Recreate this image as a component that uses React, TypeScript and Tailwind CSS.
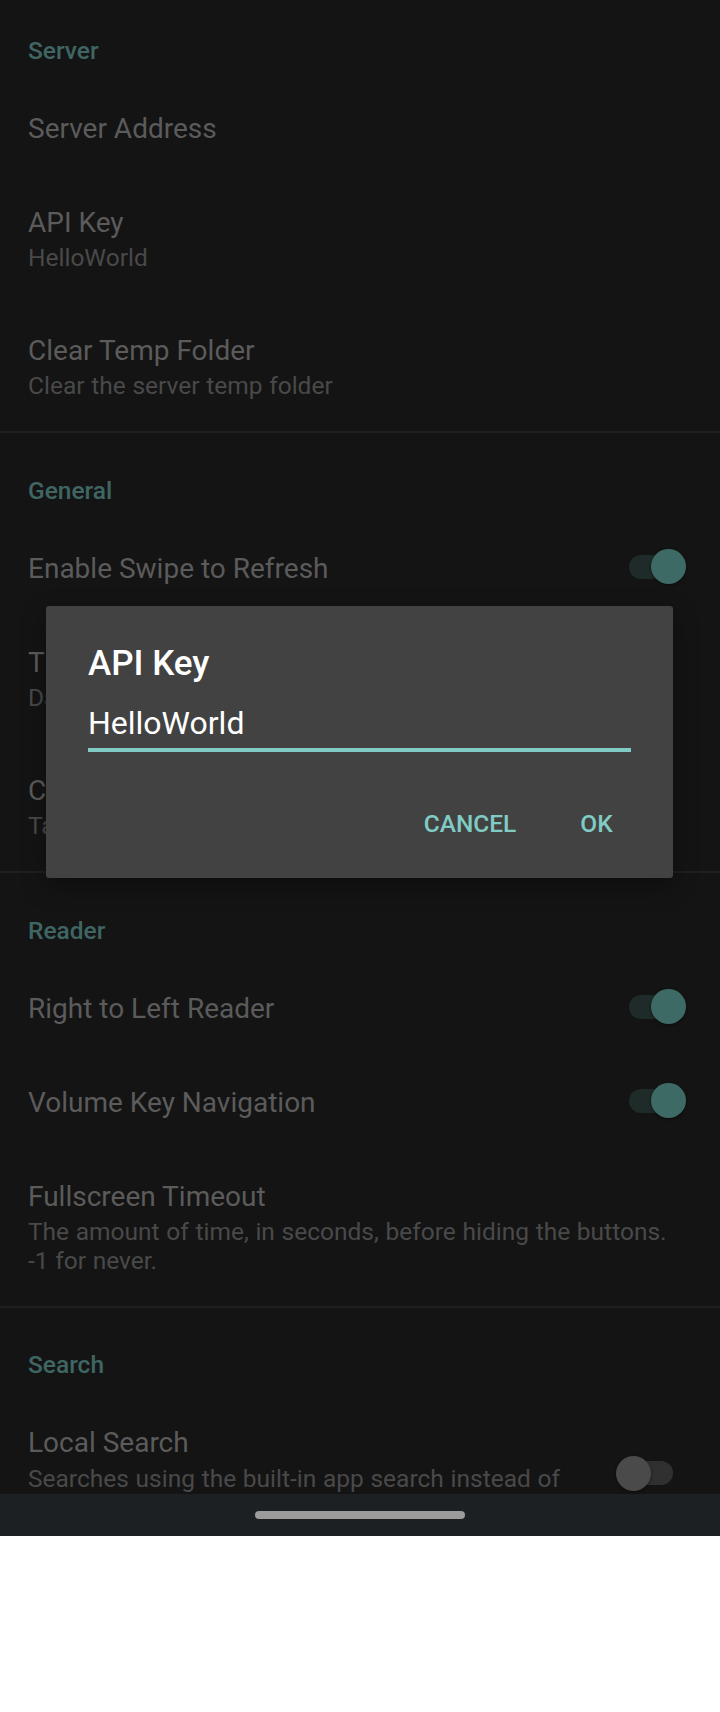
import React from 'react';

type Row = {
    title: string;
    summary?: React.ReactNode;
    toggle?: 'on' | 'off';
};

type Section = {
    name: string;
    rows: Row[];
};

const sections: Section[] = [
    {
        name: 'Server',
        rows: [
            { title: 'Server Address' },
            { title: 'API Key', summary: 'HelloWorld' },
            { title: 'Clear Temp Folder', summary: 'Clear the server temp folder' },
        ],
    },
    {
        name: 'General',
        rows: [
            { title: 'Enable Swipe to Refresh', toggle: 'on' },
            { title: 'Theme', summary: 'Dark' },
            { title: 'Compact Layout', summary: 'Tap to use a denser list' },
        ],
    },
    {
        name: 'Reader',
        rows: [
            { title: 'Right to Left Reader', toggle: 'on' },
            { title: 'Volume Key Navigation', toggle: 'on' },
            {
                title: 'Fullscreen Timeout',
                summary: (
                    <>
                        The amount of time, in seconds, before hiding the buttons.
                        <br />
                        -1 for never.
                    </>
                ),
            },
        ],
    },
    {
        name: 'Search',
        rows: [
            {
                title: 'Local Search',
                summary: 'Searches using the built-in app search instead of the server search.',
                toggle: 'off',
            },
        ],
    },
];

function SwitchOn() {
    // thumb sits over the track, so the pair is drawn in a small relative box
    return (
        <div className="relative -mt-[3px] mr-[34px] h-[35px] w-[57px] shrink-0">
            <div className="absolute top-[5.5px] left-0 h-[24px] w-[50px] rounded-full bg-[#1f2b29]" />
            <div className="absolute top-0 right-0 size-[35px] rounded-full bg-[#3e6a65] shadow-[0_1px_3px_rgba(0,0,0,0.5)]" />
        </div>
    );
}

function SwitchOff() {
    return (
        <div className="relative -mt-[2px] mr-[47px] ml-[20px] h-[35px] w-[57px] shrink-0">
            <div className="absolute top-[5.5px] right-0 h-[24px] w-[50px] rounded-full bg-[#303030]" />
            <div className="absolute top-0 left-0 size-[35px] rounded-full bg-[#4a4a4a] shadow-[0_1px_3px_rgba(0,0,0,0.5)]" />
        </div>
    );
}

function PrefRow({ row }: { row: Row }) {
    return (
        <div className="flex items-center py-[30.5px] pl-[28px]">
            <div className="min-w-0 flex-1">
                <div className="text-[28px] leading-[33px] text-[#5b5b5b]">{row.title}</div>
                {row.summary && (
                    <div className="mt-[5.5px] text-[24.5px] leading-[28.5px] [word-spacing:0.6px] text-[#494949]">
                        {row.summary}
                    </div>
                )}
            </div>
            {row.toggle === 'on' && <SwitchOn />}
            {row.toggle === 'off' && <SwitchOff />}
        </div>
    );
}

export default function App() {
    return (
        <div className="h-[1712px] w-[720px] bg-white font-['Roboto',sans-serif]">
            <div className="relative h-[1494px] overflow-hidden bg-[#141414]">
                {sections.map((section, i) => (
                    <div key={section.name}>
                        {i > 0 && <div className="h-[2px] bg-[#1f1f1f]" />}
                        <div
                            className={
                                i === 0
                                    ? 'pt-[36.5px] pb-[16px] pl-[28px] text-[24.5px] leading-[28.7px] font-medium text-[#3f6663]'
                                    : 'pt-[43.4px] pb-[16px] pl-[28px] text-[24.5px] leading-[28.7px] font-medium text-[#3f6663]'
                            }
                        >
                            {section.name}
                        </div>
                        {section.rows.map((row) => (
                            <PrefRow key={row.title} row={row} />
                        ))}
                    </div>
                ))}

                {/* API key dialog */}
                <div className="absolute top-[606px] left-[46px] flex h-[272px] w-[627px] flex-col rounded-[3px] bg-[#424242] shadow-[0_8px_24px_rgba(0,0,0,0.35)]">
                    <div className="px-[42px] pt-[36.5px] text-[35px] leading-[41px] font-medium text-white">
                        API Key
                    </div>
                    <div className="mx-[42px] mt-[21.8px]">
                        <div className="text-[32px] leading-[37.5px] text-white">HelloWorld</div>
                        <div className="mt-[5.5px] h-[3.5px] bg-[#80cbc4]" />
                    </div>
                    <div className="mt-[41px] flex justify-end gap-[10px] pr-[20.5px]">
                        <button className="flex h-[63px] w-[121px] items-center justify-center text-[24.5px] leading-[28.7px] font-medium text-[#80cbc4]">
                            CANCEL
                        </button>
                        <button className="flex h-[63px] w-[112px] items-center justify-center text-[24.5px] leading-[28.7px] font-medium text-[#80cbc4]">
                            OK
                        </button>
                    </div>
                </div>
            </div>

            <div className="flex h-[42px] items-center justify-center bg-[#1c2022]">
                <div className="h-[8px] w-[210px] rounded-full bg-[#9b9b9b]" />
            </div>
        </div>
    );
}
